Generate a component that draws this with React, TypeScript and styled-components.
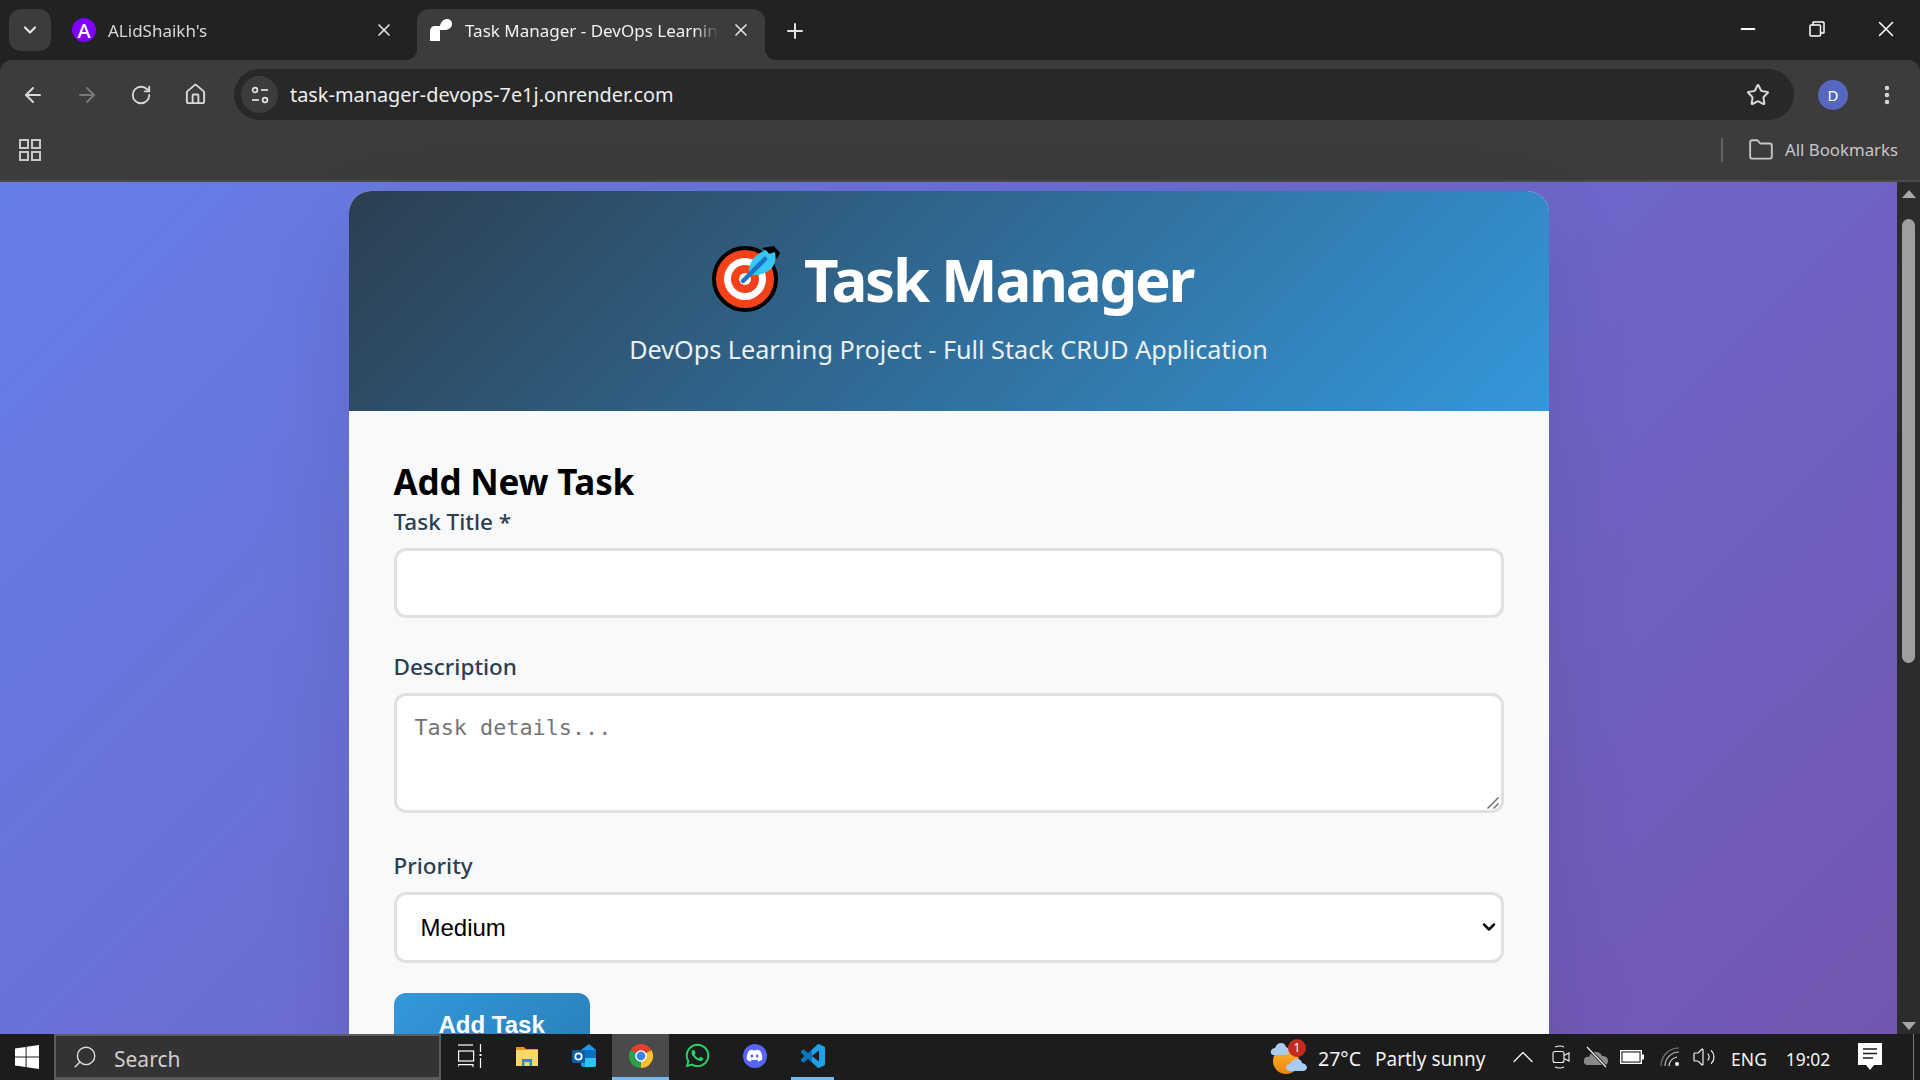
import * as React from 'react';
import styled, { createGlobalStyle } from 'styled-components';
import { ArrowLeft, ArrowRight, ChevronDown, ChevronUp, EllipsisVertical, Folder, House, Minus, Plus, RotateCw, Search, Star, Volume2, X } from 'lucide-react';
import { FaDiscord, FaWhatsapp } from 'react-icons/fa';

const UI_FONT = '"Noto Sans", "Open Sans", sans-serif';

const GlobalStyle = createGlobalStyle`
  * {
    margin: 0;
    padding: 0;
    box-sizing: border-box;
  }

  html,
  body {
    width: 1920px;
    height: 1080px;
    overflow: hidden;
    background: #202322;
    font-family: ${UI_FONT};
  }
`;

const TargetEmoji = () => (
  <svg width="68" height="68" viewBox="0 0 68 68">
    <circle cx="33" cy="34" r="31" fill="#f4411a" stroke="#000" strokeWidth="4" />
    <circle cx="33" cy="34" r="21" fill="#fff" />
    <circle cx="33" cy="34" r="14" fill="#f4411a" />
    <circle cx="33" cy="34" r="6" fill="#fff" />
    <path d="M50 3 L62 1 L68 8 L65 14 Z" fill="#000" />
    <path d="M37 29 Q36 12 54 5 L57 9 L63 7 Q66 24 50 29 Q42 31 37 29 Z" fill="#38c6f4" />
    <path d="M31 36 L53 14" stroke="#1a73c9" strokeWidth="4.5" strokeLinecap="round" />
  </svg>
);

const RenderFavicon = () => (
  <svg width="24" height="24" viewBox="0 0 24 24">
    <path d="M1 23 V13 C1 9.5 3.5 8 6 8 H11 V23 Z" fill="#fff" />
    <path d="M11 8 C12 3 15 1 18 1 C21.5 1 23 3.5 23 6 C23 10 19 12 15 12 H11 Z" fill="#fff" />
  </svg>
);

const TuneIcon = () => (
  <svg width="20" height="20" viewBox="0 0 20 20" fill="none" stroke="#e3e3e3" strokeWidth="1.7">
    <circle cx="5" cy="5" r="2.4" />
    <path d="M11 5 H18" />
    <path d="M2 15 H9" />
    <circle cx="15" cy="15" r="2.4" />
  </svg>
);

const AppsIcon = () => (
  <svg width="22" height="22" viewBox="0 0 22 22" fill="none" stroke="#c7c7c7" strokeWidth="2">
    <rect x="1" y="1" width="8" height="8" />
    <rect x="13" y="1" width="8" height="8" />
    <rect x="1" y="13" width="8" height="8" />
    <rect x="13" y="13" width="8" height="8" />
  </svg>
);

const RestoreIcon = () => (
  <svg width="16" height="16" viewBox="0 0 16 16" fill="none" stroke="#fff" strokeWidth="1.5">
    <rect x="1" y="4" width="10.5" height="11" rx="1" />
    <path d="M4 4 V1.5 Q4 1 4.5 1 H14 Q15 1 15 2 V11.5 Q15 12 14.5 12 H11.5" />
  </svg>
);

const ResizeGrip = () => (
  <svg width="12" height="12" viewBox="0 0 12 12" stroke="#6a6a6a" strokeWidth="1.4">
    <path d="M0.5 11.5 L11.5 0.5" />
    <path d="M6.5 11.5 L11.5 6.5" />
  </svg>
);

const WindowsLogo = () => (
  <svg width="24" height="24" viewBox="0 0 24 24" fill="#fff">
    <path d="M0 3.4 L10.6 2 V11.4 H0 Z" />
    <path d="M11.6 1.8 L24 0 V11.4 H11.6 Z" />
    <path d="M0 12.6 H10.6 V22 L0 20.6 Z" />
    <path d="M11.6 12.6 H24 V24 L11.6 22.2 Z" />
  </svg>
);

const TaskViewIcon = () => (
  <svg width="24" height="24" viewBox="0 0 24 24" fill="none" stroke="#fff" strokeWidth="1.2">
    <path d="M0 1 H15" />
    <rect x="0.6" y="7" width="15" height="10" />
    <path d="M0 23 V20.6 H15 V23" />
    <path d="M22.5 0 V8 M22.5 14 V24" />
    <rect x="21.5" y="10" width="2" height="2" fill="#fff" stroke="none" />
  </svg>
);

const ExplorerIcon = () => (
  <svg width="24" height="24" viewBox="0 0 24 24">
    <path d="M1 3 H9 L11 5 H23 V8 H1 Z" fill="#e29b13" />
    <rect x="1" y="6" width="22" height="16" fill="#fbd768" />
    <path d="M7 15 H17 V22 H14.5 V18 H9.5 V22 H7 Z" fill="#2b8fd8" />
  </svg>
);

const OutlookIcon = () => (
  <svg width="26" height="26" viewBox="0 0 26 26">
    <path d="M10 7 L18 1 L25 7 V22 Q25 24 23 24 H12 Q10 24 10 22 Z" fill="#1a9be8" />
    <path d="M10 7 H25 V15 H10 Z" fill="#0a6fbe" />
    <path d="M14 15 H25 V22 Q25 24 23 24 H14 Z" fill="#2cc4f0" />
    <rect x="1" y="7" width="13" height="13" rx="1" fill="#0a5ca8" />
    <circle cx="7.5" cy="13.5" r="3.2" fill="none" stroke="#fff" strokeWidth="1.8" />
  </svg>
);

const ChromeIcon = () => (
  <svg width="24" height="24" viewBox="0 0 24 24">
    <path d="M12 12 L1.6 6 A12 12 0 0 1 22.4 6 Z" fill="#e0412f" />
    <path d="M12 12 L1.6 6 A12 12 0 0 1 22.4 6 Z" fill="#fbc02d" transform="rotate(120 12 12)" />
    <path d="M12 12 L1.6 6 A12 12 0 0 1 22.4 6 Z" fill="#2f9e4f" transform="rotate(240 12 12)" />
    <circle cx="12" cy="12" r="5.8" fill="#fff" />
    <circle cx="12" cy="12" r="4.4" fill="#3b82e6" />
  </svg>
);

const VS_CODE_PATH =
  'M23.15 2.587L18.21.21a1.494 1.494 0 0 0-1.705.29l-9.46 8.63-4.12-3.128a.999.999 0 0 0-1.276.057L.327 7.261A1 1 0 0 0 .326 8.74L3.899 12 .326 15.26a1 1 0 0 0 .001 1.479L1.65 17.94a.999.999 0 0 0 1.276.057l4.12-3.128 9.46 8.63a1.492 1.492 0 0 0 1.704.29l4.942-2.377A1.5 1.5 0 0 0 24 20.06V3.939a1.5 1.5 0 0 0-.85-1.352zm-5.146 14.861L10.826 12l7.178-5.448v10.896z';

const VsCodeIcon = () => (
  <svg width="24" height="24" viewBox="0 0 24 24">
    <clipPath id="vs-left">
      <rect width="11" height="24" />
    </clipPath>
    <path d={VS_CODE_PATH} fill="#23a0e8" />
    <path d={VS_CODE_PATH} fill="#0c74bd" clipPath="url(#vs-left)" />
  </svg>
);

const WeatherIcon = () => (
  <svg width="37" height="33" viewBox="0 0 37 33">
    <defs>
      <linearGradient id="sun" x1="0" y1="0" x2="0" y2="1">
        <stop offset="0" stopColor="#fbb62c" />
        <stop offset="1" stopColor="#f08412" />
      </linearGradient>
    </defs>
    <circle cx="16" cy="20" r="13" fill="url(#sun)" />
    <path d="M4 14 Q0 14 1 9.5 Q2 7 5 7 Q7 2 11 2 Q15 2 16 6 Q19 7 19 10.5 Q19 14 15 14 Z" fill="#a9cdf0" />
    <path d="M20 30 Q16 30 16 26 Q16 23 20 23 Q22 18 27 18 Q31 18 32 22 Q37 23 37 27 Q36 30 33 30 Z" fill="#a9cdf0" />
  </svg>
);

const MeetIcon = () => (
  <svg width="18" height="24" viewBox="0 0 18 24" fill="none" stroke="#f2f2f2" strokeWidth="1.1">
    <path d="M3 2 Q8 0 12 2" />
    <path d="M3 22 Q8 24 12 22" />
    <rect x="1" y="6.5" width="11" height="11" rx="2" />
    <path d="M12 10.5 L17 8 V16 L12 13.5" />
  </svg>
);

const OneDriveIcon = () => (
  <svg width="26" height="24" viewBox="0 0 26 24">
    <path d="M5 20 Q0 20 1 15 Q2 11 6 12 Q8 6 14 7 Q18 8 19 11 Q25 11 25 16 Q25 20 21 20 Z" fill="#8a8a8a" />
    <path d="M5 3 L24 23" stroke="#1c1c1c" strokeWidth="3" />
    <path d="M4 2 L23 22" stroke="#f2f2f2" strokeWidth="1.2" />
  </svg>
);

const BatteryIcon = () => (
  <svg width="24" height="14" viewBox="0 0 24 14">
    <rect x="0.7" y="0.7" width="20.6" height="12.6" fill="none" stroke="#fff" strokeWidth="1.4" />
    <rect x="2.5" y="2.5" width="17" height="9" fill="#fff" />
    <rect x="22" y="4.5" width="2" height="5" fill="#fff" />
  </svg>
);

const WifiIcon = () => (
  <svg width="20" height="20" viewBox="0 0 20 20" fill="none" strokeWidth="1.2">
    <path d="M1 19 A18 18 0 0 1 19 1" stroke="#777" />
    <path d="M5 19 A14 14 0 0 1 19 5" stroke="#bbb" />
    <path d="M9 19 A10 10 0 0 1 17 10" stroke="#e8e8e8" />
    <circle cx="17" cy="17" r="2" fill="#fff" stroke="none" />
  </svg>
);

const NotificationIcon = () => (
  <svg width="24" height="28" viewBox="0 0 24 28">
    <path d="M0 0 H24 V22 H16 L12 27 L8 22 H0 Z" fill="#fff" />
    <path d="M5 6 H19 M5 10.5 H19 M5 15 H15" stroke="#1c1c1c" strokeWidth="1.3" />
  </svg>
);

const App = () => (
  <>
    <GlobalStyle />
    <Screen>
      <TabStrip>
        <TabSearch>
          <ChevronDown size={20} strokeWidth={2.6} />
        </TabSearch>
        <Tab>
          <AvatarFavicon>A</AvatarFavicon>
          <TabTitle>ALidShaikh's</TabTitle>
          <TabClose>
            <X size={20} />
          </TabClose>
        </Tab>
        <Tab $active>
          <RenderFavicon />
          <TabTitle $active>Task Manager - DevOps Learning Project</TabTitle>
          <TabClose>
            <X size={20} />
          </TabClose>
        </Tab>
        <NewTab>
          <Plus size={24} />
        </NewTab>
        <WindowControls>
          <WindowButton>
            <Minus size={22} />
          </WindowButton>
          <WindowButton>
            <RestoreIcon />
          </WindowButton>
          <WindowButton>
            <X size={26} strokeWidth={1.4} />
          </WindowButton>
        </WindowControls>
      </TabStrip>

      <Toolbar>
        <NavButton>
          <ArrowLeft size={24} />
        </NavButton>
        <NavButton $disabled>
          <ArrowRight size={24} />
        </NavButton>
        <NavButton>
          <RotateCw size={22} />
        </NavButton>
        <NavButton>
          <House size={23} />
        </NavButton>
        <Omnibox>
          <SiteInfo>
            <TuneIcon />
          </SiteInfo>
          <Url>task-manager-devops-7e1j.onrender.com</Url>
          <StarSlot>
            <Star size={24} />
          </StarSlot>
        </Omnibox>
        <NavButton>
          <ProfileBadge>D</ProfileBadge>
        </NavButton>
        <NavButton>
          <EllipsisVertical size={24} strokeWidth={2.4} />
        </NavButton>
      </Toolbar>

      <BookmarksBar>
        <AppsIcon />
        <BookmarksRight>
          <BookmarkDivider />
          <Folder size={26} strokeWidth={1.7} />
          <BookmarkLabel>All Bookmarks</BookmarkLabel>
        </BookmarksRight>
      </BookmarksBar>

      <Viewport>
        <Page>
          <Card>
            <Header>
              <Title>
                <TargetEmoji />
                <span>Task Manager</span>
              </Title>
              <Subtitle>DevOps Learning Project - Full Stack CRUD Application</Subtitle>
            </Header>
            <FormSection>
              <Heading>Add New Task</Heading>
              <Field>
                <Label>Task Title *</Label>
                <TextInput type="text" />
              </Field>
              <Field>
                <Label>Description</Label>
                <AreaWrap>
                  <TextArea placeholder="Task details..." />
                  <GripSlot>
                    <ResizeGrip />
                  </GripSlot>
                </AreaWrap>
              </Field>
              <Field>
                <Label>Priority</Label>
                <SelectWrap>
                  <Select defaultValue="medium">
                    <option value="low">Low</option>
                    <option value="medium">Medium</option>
                    <option value="high">High</option>
                  </Select>
                  <SelectArrow>
                    <ChevronDown size={20} strokeWidth={3} />
                  </SelectArrow>
                </SelectWrap>
              </Field>
              <SubmitButton type="button">Add Task</SubmitButton>
            </FormSection>
          </Card>
        </Page>
        <ScrollBar>
          <ScrollArrow />
          <ScrollThumb />
          <ScrollArrow $down />
        </ScrollBar>
      </Viewport>

      <Taskbar>
        <StartSlot>
          <WindowsLogo />
        </StartSlot>
        <SearchBox>
          <SearchGlass>
            <Search size={26} strokeWidth={1.3} />
          </SearchGlass>
          <SearchLabel>Search</SearchLabel>
        </SearchBox>
        <TaskSlot>
          <TaskViewIcon />
        </TaskSlot>
        <TaskSlot>
          <ExplorerIcon />
        </TaskSlot>
        <TaskSlot>
          <OutlookIcon />
        </TaskSlot>
        <TaskSlot $selected $running>
          <ChromeIcon />
        </TaskSlot>
        <TaskSlot>
          <FaWhatsapp size={27} color="#25d366" />
        </TaskSlot>
        <TaskSlot>
          <DiscordBadge>
            <FaDiscord size={17} color="#fff" />
          </DiscordBadge>
        </TaskSlot>
        <VsCodeSlot $running>
          <VsCodeIcon />
        </VsCodeSlot>

        <Tray>
          <WeatherSlot>
            <WeatherIcon />
            <WeatherBadge>1</WeatherBadge>
          </WeatherSlot>
          <TrayText $width={57} $size={19.5}>
            27°C
          </TrayText>
          <TrayText $width={128} $size={19}>
            Partly sunny
          </TrayText>
          <TraySlot $width={40}>
            <ChevronUp size={36} strokeWidth={0.9} />
          </TraySlot>
          <TraySlot $width={36}>
            <MeetIcon />
          </TraySlot>
          <TraySlot $width={34}>
            <OneDriveIcon />
          </TraySlot>
          <TraySlot $width={38}>
            <BatteryIcon />
          </TraySlot>
          <TraySlot $width={38}>
            <WifiIcon />
          </TraySlot>
          <TraySlot $width={30}>
            <Volume2 size={24} strokeWidth={1.2} />
          </TraySlot>
          <TrayText $width={60} $size={17.5} $center>
            ENG
          </TrayText>
          <TrayText $width={58} $size={17.5} $center>
            19:02
          </TrayText>
          <TraySlot $width={66}>
            <NotificationIcon />
          </TraySlot>
          <ShowDesktop />
        </Tray>
      </Taskbar>
    </Screen>
  </>
);

const Screen = styled.div`
  width: 1920px;
  height: 1080px;
  display: flex;
  flex-direction: column;
  overflow: hidden;
`;

const TabStrip = styled.div`
  height: 60px;
  flex: none;
  display: flex;
  align-items: flex-end;
  padding-left: 9px;
  background: #202322;
`;

const TabSearch = styled.div`
  width: 42px;
  height: 42px;
  margin-bottom: 9px;
  margin-right: 9px;
  display: flex;
  align-items: center;
  justify-content: center;
  border-radius: 12px;
  background: #3c3c3c;
  color: #e3e3e3;
`;

const Tab = styled.div<{ $active?: boolean }>`
  position: relative;
  width: 348px;
  height: 51px;
  margin-right: 9px;
  padding: 0 14px 9px 12px;
  display: flex;
  align-items: center;
  gap: 12px;
  border-radius: 12px 12px 0 0;
  color: #e3e3e3;
  background: ${(props) => (props.$active ? '#3c3c3c' : 'transparent')};

  &::before,
  &::after {
    content: '';
    display: ${(props) => (props.$active ? 'block' : 'none')};
    position: absolute;
    bottom: 0;
    width: 12px;
    height: 12px;
  }

  &::before {
    left: -12px;
    background: radial-gradient(circle at 0 0, transparent 12px, #3c3c3c 12.5px);
  }

  &::after {
    right: -12px;
    background: radial-gradient(circle at 100% 0, transparent 12px, #3c3c3c 12.5px);
  }
`;

const AvatarFavicon = styled.div`
  width: 24px;
  height: 24px;
  flex: none;
  display: flex;
  align-items: center;
  justify-content: center;
  border-radius: 50%;
  background: #7f00ff;
  color: #fff;
  font-size: 20px;
  font-weight: 500;
`;

const TabTitle = styled.div<{ $active?: boolean }>`
  flex: 1;
  min-width: 0;
  overflow: hidden;
  white-space: nowrap;
  font-size: 17px;
  color: ${(props) => (props.$active ? '#f1f1f1' : '#d8d8d8')};
  mask-image: linear-gradient(to right, #000 90%, transparent 100%);
`;

const TabClose = styled.div`
  width: 20px;
  height: 20px;
  flex: none;
  display: flex;
  color: #e3e3e3;
`;

const NewTab = styled.div`
  margin: 0 0 17px 9px;
  display: flex;
  color: #e3e3e3;
`;

const WindowControls = styled.div`
  margin-left: auto;
  align-self: flex-start;
  display: flex;
`;

const WindowButton = styled.div`
  width: 69px;
  height: 58px;
  display: flex;
  align-items: center;
  justify-content: center;
  color: #fff;
`;

const Toolbar = styled.div`
  height: 69px;
  flex: none;
  padding: 9px 6px;
  display: flex;
  align-items: center;
  border-radius: 12px 12px 0 0;
  background: #3c3c3c;
`;

const NavButton = styled.div<{ $disabled?: boolean }>`
  width: 54px;
  height: 51px;
  flex: none;
  display: flex;
  align-items: center;
  justify-content: center;
  color: ${(props) => (props.$disabled ? '#787878' : '#d8d8d8')};
`;

const Omnibox = styled.div`
  width: 1560px;
  height: 51px;
  flex: none;
  margin: 0 12px;
  padding: 0 24px 0 7px;
  display: flex;
  align-items: center;
  border-radius: 26px;
  background: #282828;
`;

const SiteInfo = styled.div`
  width: 37px;
  height: 37px;
  flex: none;
  margin-right: 12px;
  display: flex;
  align-items: center;
  justify-content: center;
  border-radius: 50%;
  background: #3c3c3c;
`;

const Url = styled.div`
  flex: 1;
  font-size: 19.9px;
  color: #ededed;
`;

const StarSlot = styled.div`
  display: flex;
  color: #d8d8d8;
`;

const ProfileBadge = styled.div`
  width: 30px;
  height: 30px;
  display: flex;
  align-items: center;
  justify-content: center;
  border-radius: 50%;
  background: #5767c0;
  color: #fff;
  font-size: 15px;
`;

const BookmarksBar = styled.div`
  height: 53px;
  flex: none;
  padding: 0 22px 10px 19px;
  display: flex;
  align-items: center;
  justify-content: space-between;
  background: #3c3c3c;
  border-bottom: 2px solid #4a4a4a;
`;

const BookmarksRight = styled.div`
  display: flex;
  align-items: center;
  color: #c7c7c7;
`;

const BookmarkDivider = styled.div`
  width: 2px;
  height: 24px;
  margin-right: 25px;
  background: #626262;
`;

const BookmarkLabel = styled.span`
  margin-left: 11px;
  font-size: 16.8px;
  color: #c7c7c7;
`;

const Viewport = styled.div`
  flex: 1;
  min-height: 0;
  display: flex;
`;

const Page = styled.div`
  flex: 1;
  min-width: 0;
  height: 1560px;
  padding-top: 9px;
  background: linear-gradient(135deg, #667eea 0%, #764ba2 100%);
`;

const Card = styled.div`
  width: 1200px;
  margin: 0 auto;
  border-radius: 22px;
  overflow: hidden;
  background: #f8f9fa;
  box-shadow: 0 30px 90px rgba(0, 0, 0, 0.1);
`;

const Header = styled.header`
  height: 220px;
  padding-top: 52px;
  text-align: center;
  color: #fff;
  background: linear-gradient(135deg, #2c3e50 0%, #3498db 100%);
`;

const Title = styled.h1`
  display: flex;
  align-items: center;
  justify-content: center;
  gap: 24px;
  height: 72px;
  padding-left: 8px;
  font-size: 60px;
  font-weight: 700;
  line-height: 72px;
  letter-spacing: -2.3px;
`;

const Subtitle = styled.p`
  margin-top: 16px;
  font-size: 25.2px;
  line-height: 36px;
  color: #ecf0f1;
`;

const FormSection = styled.section`
  padding: 47px 45px 45px;
`;

const Heading = styled.h2`
  font-size: 35px;
  font-weight: 700;
  line-height: 48px;
  letter-spacing: -0.2px;
  color: #000;
`;

const Field = styled.div`
  display: flow-root;
  margin-bottom: 30px;
`;

const Label = styled.label`
  display: block;
  margin-bottom: 11px;
  font-size: 22.5px;
  font-weight: 500;
  line-height: 31px;
  color: #2c3e50;
`;

const TextInput = styled.input`
  display: block;
  width: 100%;
  height: 70px;
  margin-bottom: 3px;
  padding: 18px;
  border: 3px solid #e0e0e0;
  border-radius: 12px;
  background: #fff;
  font-family: 'Liberation Sans', sans-serif;
  font-size: 24px;
`;

const AreaWrap = styled.div`
  position: relative;
  margin-bottom: 7px;
`;

const TextArea = styled.textarea`
  display: block;
  width: 100%;
  height: 120px;
  padding: 18px;
  border: 3px solid #e0e0e0;
  border-radius: 12px;
  background: #fff;
  resize: none;
  font-family: 'DejaVu Sans Mono', monospace;
  font-size: 21.8px;
  line-height: 27px;

  &::placeholder {
    color: #757575;
  }
`;

const GripSlot = styled.span`
  position: absolute;
  right: 5px;
  bottom: 4px;
  display: flex;
`;

const SelectWrap = styled.div`
  position: relative;
`;

const Select = styled.select`
  display: block;
  width: 100%;
  height: 71px;
  padding: 18px 24px;
  border: 3px solid #e0e0e0;
  border-radius: 12px;
  background: #fff;
  color: #000;
  appearance: none;
  font-family: 'Liberation Sans', sans-serif;
  font-size: 24px;
`;

const SelectArrow = styled.span`
  position: absolute;
  top: 25px;
  right: 5px;
  display: flex;
  color: #111;
`;

const SubmitButton = styled.button`
  display: block;
  padding: 18px 45px;
  border: none;
  border-radius: 12px;
  background: linear-gradient(135deg, #3498db 0%, #2980b9 100%);
  color: #fff;
  font-family: 'Liberation Sans', sans-serif;
  font-size: 24px;
  font-weight: 700;
  line-height: 27px;
`;

const ScrollBar = styled.div`
  width: 23px;
  flex: none;
  padding: 8px 0 4px;
  display: flex;
  flex-direction: column;
  align-items: center;
  background: #2c2c2c;
`;

const ScrollArrow = styled.div<{ $down?: boolean }>`
  width: 0;
  height: 0;
  flex: none;
  margin-top: ${(props) => (props.$down ? 'auto' : '0')};
  border-left: 7.5px solid transparent;
  border-right: 7.5px solid transparent;
  border-bottom: ${(props) => (props.$down ? 'none' : '8px solid #a8a8a8')};
  border-top: ${(props) => (props.$down ? '8px solid #a8a8a8' : 'none')};
`;

const ScrollThumb = styled.div`
  width: 13px;
  height: 444px;
  flex: none;
  margin-top: 21px;
  border-radius: 7px;
  background: #9f9f9f;
`;

const Taskbar = styled.div`
  height: 46px;
  flex: none;
  display: flex;
  align-items: stretch;
  background: #1c1c1c;
`;

const StartSlot = styled.div`
  width: 54px;
  flex: none;
  display: flex;
  align-items: center;
  justify-content: center;
`;

const SearchBox = styled.div`
  width: 387px;
  flex: none;
  padding-left: 16px;
  display: flex;
  align-items: center;
  gap: 16px;
  border: 2px solid #5c5c5c;
  border-bottom-width: 3px;
  background: #333;
  color: #ddd;
`;

const SearchGlass = styled.span`
  display: flex;
  transform: scaleX(-1);
`;

const SearchLabel = styled.span`
  padding-top: 4px;
  font-size: 21px;
  color: #cfcfcf;
`;

const TaskSlot = styled.div<{ $selected?: boolean; $running?: boolean }>`
  width: 57px;
  flex: none;
  display: flex;
  align-items: center;
  justify-content: center;
  border-bottom: 3px solid ${(props) => (props.$running ? '#76b9ed' : 'transparent')};
  background: ${(props) => (props.$selected ? '#4a4a4a' : 'transparent')};
`;

const VsCodeSlot = styled(TaskSlot)`
  width: 43px;
  margin-left: 8px;
`;

const DiscordBadge = styled.div`
  width: 24px;
  height: 24px;
  display: flex;
  align-items: center;
  justify-content: center;
  border-radius: 50%;
  background: #5865f2;
`;

const Tray = styled.div`
  margin-left: auto;
  display: flex;
  align-items: stretch;
  color: #f2f2f2;
`;

const WeatherSlot = styled.div`
  position: relative;
  width: 48px;
  display: flex;
  align-items: center;
`;

const WeatherBadge = styled.span`
  position: absolute;
  top: 5px;
  left: 18px;
  width: 18px;
  height: 18px;
  border-radius: 50%;
  background: #c42b1c;
  color: #fff;
  font-size: 12px;
  line-height: 18px;
  text-align: center;
`;

const TrayText = styled.div<{ $width: number; $size: number; $center?: boolean }>`
  width: ${(props) => props.$width}px;
  padding-top: 3px;
  display: flex;
  align-items: center;
  justify-content: ${(props) => (props.$center ? 'center' : 'flex-start')};
  font-size: ${(props) => props.$size}px;
  white-space: nowrap;
`;

const TraySlot = styled.div<{ $width: number }>`
  width: ${(props) => props.$width}px;
  display: flex;
  align-items: center;
  justify-content: center;
`;

const ShowDesktop = styled.div`
  width: 7px;
  margin-left: 10px;
  border-left: 1px solid #777;
`;

export default App;
